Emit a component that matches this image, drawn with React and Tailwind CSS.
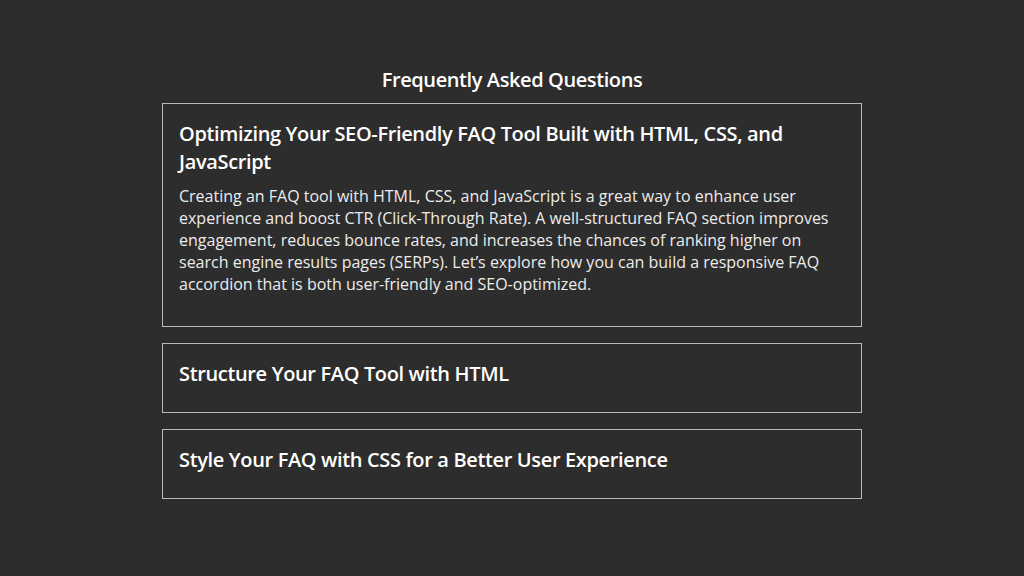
import React, { useState } from 'react';

const faqs = [
  {
    q: 'Optimizing Your SEO-Friendly FAQ Tool Built with HTML, CSS, and JavaScript',
    a: 'Creating an FAQ tool with HTML, CSS, and JavaScript is a great way to enhance user experience and boost CTR (Click-Through Rate). A well-structured FAQ section improves engagement, reduces bounce rates, and increases the chances of ranking higher on search engine results pages (SERPs). Let’s explore how you can build a responsive FAQ accordion that is both user-friendly and SEO-optimized.',
  },
  {
    q: 'Structure Your FAQ Tool with HTML',
    a: 'Use semantic elements and clear headings so search engines can understand each question and answer.',
  },
  {
    q: 'Style Your FAQ with CSS for a Better User Experience',
    a: 'Keep the layout clean, readable and responsive so visitors can scan the answers quickly.',
  },
];

const App = () => {
  const [open, setOpen] = useState(0);

  return (
    <div className="min-h-screen bg-[#2d2d2d] text-white font-['Open_Sans',sans-serif] pt-[67px]">
      <div className="w-[700px] mx-auto flex flex-col">
        <h2 className="text-center text-[20px] leading-[26px] font-semibold tracking-[-0.4px] mb-[10px]">Frequently Asked Questions</h2>
        <div className="flex flex-col gap-4">
          {faqs.map((item, idx) => (
            <div
              key={idx}
              onClick={() => setOpen(open === idx ? -1 : idx)}
              className="border border-[#b8b8b8] px-4 pt-4 pb-6 cursor-pointer"
            >
              <h3 className="text-[20px] leading-[28px] font-semibold tracking-[-0.35px]">{item.q}</h3>
              {open === idx && (
                <p className="text-[16px] leading-[22px] text-[#ececec] mt-[9px] mb-[7px]">{item.a}</p>
              )}
            </div>
          ))}
        </div>
      </div>
    </div>
  );
};

export default App;
